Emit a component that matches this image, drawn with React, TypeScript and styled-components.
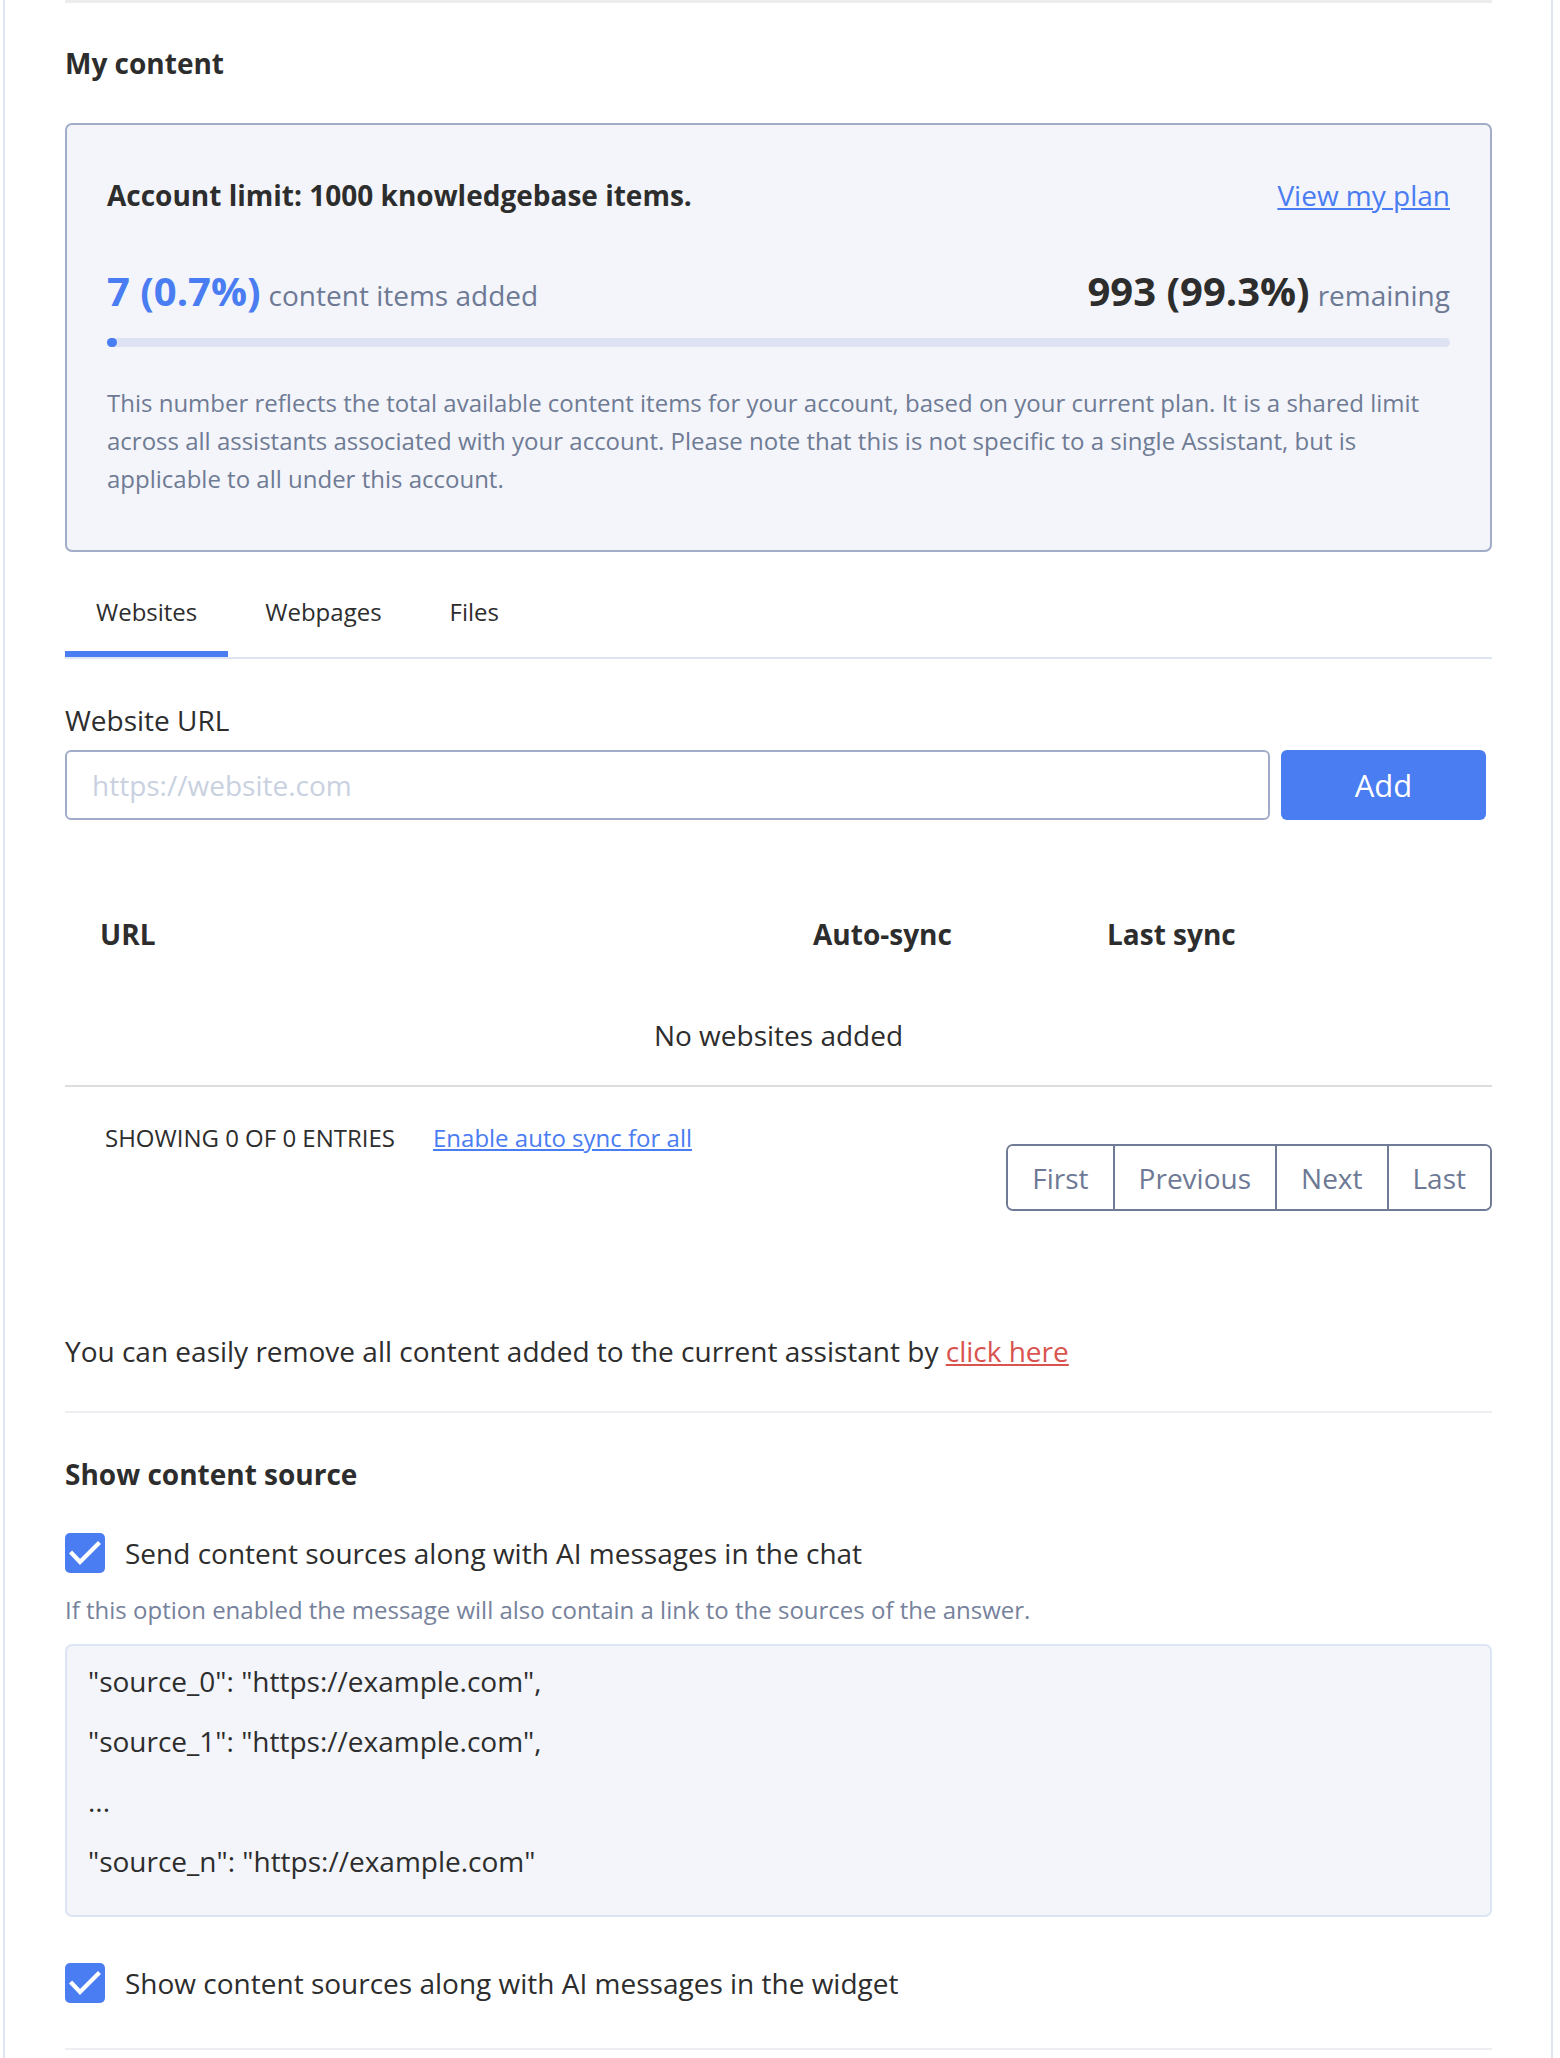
import React from 'react';
import styled, { createGlobalStyle } from 'styled-components';

const GlobalStyle = createGlobalStyle`
    body {
        margin: 0;
        background: #fff;
        font-family: 'Open Sans', 'Noto Sans', sans-serif;
        color: #333;
    }
`;

const Panel = styled.div`
    margin-left: 3px;
    width: 1550px;
    box-sizing: border-box;
    border-left: 2px solid #dfe5f1;
    border-right: 2px solid #dfe5f1;
    padding: 0 59px 8px 60px;
`;

const TopRule = styled.div`
    height: 3px;
    background: #ededed;
`;

const Divider = styled.div<{ $top: number; $color?: string }>`
    height: 2px;
    margin-top: ${p => p.$top}px;
    background: ${p => p.$color || '#eceef2'};
`;

const SectionTitle = styled.h2<{ $top: number }>`
    margin: ${p => p.$top}px 0 0 0;
    font-size: 28px;
    line-height: 38px;
    font-weight: 700;
    color: #2d2d2d;
`;

const LimitBox = styled.div`
    margin-top: 41px;
    border: 2px solid #a1adc8;
    border-radius: 7px;
    background: #f3f5fa;
    padding: 53px 40px 52px 40px;
`;

const LimitHeader = styled.div`
    display: flex;
    justify-content: space-between;
    align-items: center;
    line-height: 34px;
`;

const LimitTitle = styled.div`
    font-size: 28px;
    font-weight: 700;
    color: #2d2d2d;
`;

const Link = styled.a<{ $color?: string }>`
    color: ${p => p.$color || '#4a7cf2'};
    text-decoration: underline;
    cursor: pointer;
`;

const PlanLink = styled(Link)`
    font-size: 28px;
`;

const StatsRow = styled.div`
    display: flex;
    justify-content: space-between;
    align-items: baseline;
    margin-top: 56px;
    line-height: 46px;
`;

const Stat = styled.div`
    display: flex;
    align-items: baseline;
    gap: 8px;
`;

const StatValue = styled.span<{ $blue?: boolean }>`
    font-size: 40px;
    font-weight: 700;
    color: ${p => (p.$blue ? '#4a7cf2' : '#2d2d2d')};
`;

const StatLabel = styled.span`
    font-size: 28px;
    color: #6d7995;
`;

const Track = styled.div`
    margin-top: 20px;
    height: 9px;
    border-radius: 5px;
    background: #dde3f3;
`;

const Fill = styled.div`
    height: 100%;
    min-width: 10px;
    border-radius: 5px;
    background: #4a7cf2;
`;

const LimitNote = styled.p`
    margin: 37px 0 0 0;
    font-size: 24px;
    line-height: 38px;
    color: #6f7b94;
`;

const TabList = styled.div`
    display: flex;
    gap: 6px;
    margin-top: 19px;
    border-bottom: 2px solid #dde5f2;
`;

const Tab = styled.div<{ $active?: boolean }>`
    display: flex;
    align-items: center;
    height: 80px;
    padding: 0 31px;
    font-size: 24px;
    color: #2d2d2d;
    border-bottom: 6px solid ${p => (p.$active ? '#4a7cf2' : 'transparent')};
    cursor: pointer;
`;

const FieldLabel = styled.label`
    display: block;
    margin-top: 42px;
    font-size: 28px;
    line-height: 38px;
    color: #2d2d2d;
`;

const InputRow = styled.div`
    display: flex;
    gap: 11px;
    margin-top: 11px;
    padding-right: 6px;
`;

const UrlInput = styled.input`
    flex: 1;
    height: 70px;
    box-sizing: border-box;
    border: 2px solid #a1adc8;
    border-radius: 6px;
    padding: 0 25px;
    font-family: inherit;
    font-size: 28px;
    color: #333;
    outline: none;
    &::placeholder {
        color: #c9d1e1;
    }
`;

const AddButton = styled.button`
    width: 205px;
    height: 70px;
    border: none;
    border-radius: 6px;
    background: #4a7cf2;
    color: #fff;
    font-family: inherit;
    font-size: 31px;
    cursor: pointer;
`;

const TableHead = styled.div`
    display: grid;
    grid-template-columns: 713px 294px 1fr;
    margin-top: 95px;
    line-height: 38px;
`;

const HeadCell = styled.div`
    padding-left: 35px;
    font-size: 28px;
    font-weight: 700;
    color: #2d2d2d;
`;

const EmptyRow = styled.div`
    padding: 63px 0 31px 0;
    text-align: center;
    font-size: 28px;
    line-height: 38px;
    color: #2d2d2d;
`;

const TableFooter = styled.div`
    display: flex;
    justify-content: space-between;
    align-items: flex-start;
`;

const EntriesInfo = styled.div`
    display: flex;
    gap: 38px;
    padding: 35px 0 0 40px;
    font-size: 24px;
    line-height: 32px;
`;

const EntriesCount = styled.span`
    text-transform: uppercase;
    color: #2d2d2d;
`;

const Pager = styled.div`
    display: flex;
    margin-top: 57px;
    border: 2px solid #707c96;
    border-radius: 7px;
    overflow: hidden;
`;

const PageButton = styled.button`
    height: 63px;
    padding: 0 24px;
    border: none;
    border-left: 2px solid #707c96;
    background: #fff;
    font-family: inherit;
    font-size: 28px;
    color: #6d7995;
    cursor: pointer;
    &:first-child {
        border-left: none;
    }
`;

const RemoveNote = styled.p`
    margin: 121px 0 0 0;
    font-size: 28px;
    line-height: 38px;
    color: #2d2d2d;
`;

const CheckRow = styled.label<{ $top: number }>`
    display: flex;
    align-items: center;
    gap: 20px;
    margin-top: ${p => p.$top}px;
    font-size: 28px;
    line-height: 38px;
    color: #2d2d2d;
    cursor: pointer;
`;

const CheckBox = styled.span`
    display: block;
    width: 40px;
    height: 40px;
    border-radius: 5px;
    background: #4a7cf2;
    flex-shrink: 0;
`;

const Hint = styled.div`
    margin-top: 21px;
    font-size: 24px;
    line-height: 32px;
    color: #76829b;
`;

const CodeBox = styled.div`
    margin-top: 18px;
    border: 2px solid #dde4f2;
    border-radius: 7px;
    background: #f3f5fa;
    padding: 16px 21px 35px 21px;
`;

const CodeLine = styled.p`
    margin: 0 0 22px 0;
    font-size: 28px;
    line-height: 38px;
    color: #2d2d2d;
    &:last-child {
        margin-bottom: 0;
    }
`;

const Check = () => (
    <CheckBox>
        <svg width="40" height="40" viewBox="0 0 40 40" fill="none">
            <path d="M7 20.5 L15 29 L33 11" stroke="#fff" strokeWidth="4.2" strokeLinecap="square" strokeLinejoin="miter" />
        </svg>
    </CheckBox>
);

const sources = ['"source_0": "https://example.com",', '"source_1": "https://example.com",', '...', '"source_n": "https://example.com"'];

const used = 7;
const limit = 1000;

export default function App() {
    const pct = (used / limit) * 100;
    return (
        <>
            <GlobalStyle />
            <Panel>
                <TopRule />
                <SectionTitle $top={41}>My content</SectionTitle>

                <LimitBox>
                    <LimitHeader>
                        <LimitTitle>Account limit: {limit} knowledgebase items.</LimitTitle>
                        <PlanLink>View my plan</PlanLink>
                    </LimitHeader>
                    <StatsRow>
                        <Stat>
                            <StatValue $blue>{used} ({pct.toFixed(1)}%)</StatValue>
                            <StatLabel>content items added</StatLabel>
                        </Stat>
                        <Stat>
                            <StatValue>{limit - used} ({(100 - pct).toFixed(1)}%)</StatValue>
                            <StatLabel>remaining</StatLabel>
                        </Stat>
                    </StatsRow>
                    <Track>
                        <Fill style={{ width: `${pct}%` }} />
                    </Track>
                    <LimitNote>
                        This number reflects the total available content items for your account, based on your current plan. It is a shared limit across all assistants associated with your account. Please note that this is not specific to a single Assistant, but is applicable to all under this account.
                    </LimitNote>
                </LimitBox>

                <TabList>
                    <Tab $active>Websites</Tab>
                    <Tab>Webpages</Tab>
                    <Tab>Files</Tab>
                </TabList>

                <FieldLabel>Website URL</FieldLabel>
                <InputRow>
                    <UrlInput placeholder="https://website.com" />
                    <AddButton>Add</AddButton>
                </InputRow>

                <TableHead>
                    <HeadCell>URL</HeadCell>
                    <HeadCell>Auto-sync</HeadCell>
                    <HeadCell>Last sync</HeadCell>
                </TableHead>
                <EmptyRow>No websites added</EmptyRow>
                <Divider $top={0} $color="#dddddd" />

                <TableFooter>
                    <EntriesInfo>
                        <EntriesCount>Showing 0 of 0 entries</EntriesCount>
                        <Link>Enable auto sync for all</Link>
                    </EntriesInfo>
                    <Pager>
                        <PageButton>First</PageButton>
                        <PageButton>Previous</PageButton>
                        <PageButton>Next</PageButton>
                        <PageButton>Last</PageButton>
                    </Pager>
                </TableFooter>

                <RemoveNote>
                    You can easily remove all content added to the current assistant by <Link $color="#d9534f">click here</Link>
                </RemoveNote>
                <Divider $top={41} />

                <SectionTitle $top={42}>Show content source</SectionTitle>
                <CheckRow $top={40}>
                    <Check />
                    Send content sources along with AI messages in the chat
                </CheckRow>
                <Hint>If this option enabled the message will also contain a link to the sources of the answer.</Hint>
                <CodeBox>
                    {sources.map(s => (
                        <CodeLine key={s}>{s}</CodeLine>
                    ))}
                </CodeBox>
                <CheckRow $top={46}>
                    <Check />
                    Show content sources along with AI messages in the widget
                </CheckRow>
                <Divider $top={45} />
            </Panel>
        </>
    );
}
